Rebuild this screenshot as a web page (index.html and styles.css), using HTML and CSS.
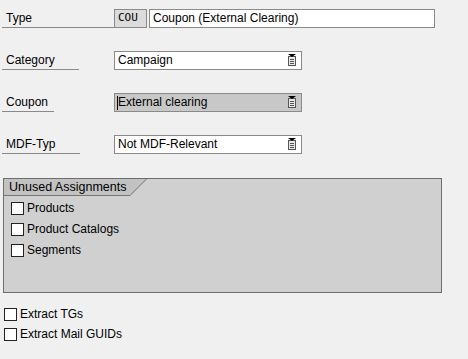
FILE: index.html
```html
<!DOCTYPE html>
<html>
<head>
<meta charset="utf-8">
<link rel="stylesheet" href="styles.css">
</head>
<body>
<div class="page">
  <div class="row">
    <div class="label w-type"><span>Type</span></div>
    <div class="code">COU</div>
    <div class="field text-field">Coupon (External Clearing)</div>
  </div>
  <div class="row">
    <div class="label w-cat"><span>Category</span></div>
    <div class="field dropdown"><span class="val">Campaign</span>
      <svg class="dd" width="10" height="12" viewBox="0 0 10 12"><rect x="1.5" y="2.5" width="7" height="9" fill="#e8e8e8" stroke="#555"/><path d="M3 5.5h4M3 7.5h4M3 9.5h4" stroke="#555"/><path d="M1 0h8l-4 3z" fill="#000"/></svg>
    </div>
  </div>
  <div class="row">
    <div class="label w-coupon"><span>Coupon</span></div>
    <div class="field dropdown active"><span class="val"><span class="caret"></span>External clearing</span>
      <svg class="dd" width="10" height="12" viewBox="0 0 10 12"><rect x="1.5" y="2.5" width="7" height="9" fill="#e8e8e8" stroke="#555"/><path d="M3 5.5h4M3 7.5h4M3 9.5h4" stroke="#555"/><path d="M1 0h8l-4 3z" fill="#000"/></svg>
    </div>
  </div>
  <div class="row">
    <div class="label w-mdf"><span>MDF-Typ</span></div>
    <div class="field dropdown"><span class="val">Not MDF-Relevant</span>
      <svg class="dd" width="10" height="12" viewBox="0 0 10 12"><rect x="1.5" y="2.5" width="7" height="9" fill="#e8e8e8" stroke="#555"/><path d="M3 5.5h4M3 7.5h4M3 9.5h4" stroke="#555"/><path d="M1 0h8l-4 3z" fill="#000"/></svg>
    </div>
  </div>

  <div class="group">
    <div class="tabbar">
      <div class="tab">Unused Assignments</div>
      <svg class="slant" width="17" height="17" viewBox="0 0 17 17"><path d="M0 0H17L0 17z" fill="#c2c2c2"/><path d="M0 16.5L16.5 0" stroke="#777" stroke-width="1"/></svg>
    </div>
    <div class="checks">
      <label class="check"><span class="box"></span>Products</label>
      <label class="check"><span class="box"></span>Product Catalogs</label>
      <label class="check"><span class="box"></span>Segments</label>
    </div>
  </div>

  <div class="outer-checks">
    <label class="check"><span class="box"></span>Extract TGs</label>
    <label class="check"><span class="box"></span>Extract Mail GUIDs</label>
  </div>
</div>
</body>
</html>
```

FILE: styles.css
```css
html, body {
  margin: 0;
  padding: 0;
  background: #f0f0f0;
}
body {
  width: 468px;
  height: 359px;
  overflow: hidden;
  font-family: "Liberation Sans", Arial, sans-serif;
  font-size: 12px;
  color: #000;
}
.page {
  padding-top: 9px;
  display: flex;
  flex-direction: column;
}
.row {
  display: flex;
  align-items: stretch;
  height: 19px;
  margin-bottom: 23px;
}
.row:nth-child(4) {
  margin-bottom: 24px;
}
.label {
  width: 112px;
  display: flex;
  align-items: flex-end;
  padding-left: 2px;
}
.label span {
  display: block;
  box-sizing: border-box;
  padding-left: 4px;
  padding-bottom: 2px;
  border-bottom: 1px solid #8a8a8a;
  line-height: 14px;
}
.w-type span { width: 112px; }
.w-cat span { width: 77px; }
.w-coupon span { width: 52px; }
.w-mdf span { width: 78px; }

.code {
  box-sizing: border-box;
  width: 33px;
  background: #dcdcdc;
  border: 1px solid #8a8a8a;
  font-family: "DejaVu Sans Mono", "Liberation Mono", monospace;
  font-size: 11px;
  line-height: 16px;
  padding-left: 3px;
}
.field {
  box-sizing: border-box;
  border: 1px solid #8a8a8a;
  background: #fff;
  line-height: 17px;
  padding-left: 3px;
}
.text-field {
  margin-left: 2px;
  width: 286px;
}
.dropdown {
  width: 188px;
  display: flex;
  align-items: center;
  justify-content: space-between;
  padding-right: 4px;
}
.dropdown.active {
  background: #c8c8c8;
  padding-left: 2px;
}
.val {
  display: flex;
  align-items: center;
}
.caret {
  display: inline-block;
  width: 1px;
  height: 14px;
  background: #000;
}
.dd {
  display: block;
  margin-top: -1px;
}

.group {
  box-sizing: border-box;
  margin-left: 3px;
  width: 439px;
  height: 115px;
  border: 1px solid #6e6e6e;
  background: #d0d0d0;
}
.tabbar {
  display: flex;
  height: 17px;
}
.tab {
  box-sizing: border-box;
  width: 126px;
  height: 17px;
  background: #c2c2c2;
  border-bottom: 1px solid #777;
  padding-left: 5px;
  line-height: 16px;
  font-size: 12.5px;
}
.slant {
  display: block;
}
.checks {
  padding-top: 6px;
  padding-left: 7px;
  display: flex;
  flex-direction: column;
  gap: 8px;
}
.check {
  display: flex;
  align-items: center;
  height: 13px;
  line-height: 13px;
}
.box {
  box-sizing: border-box;
  width: 13px;
  height: 13px;
  border: 1px solid #222;
  background: #fff;
  margin-right: 3px;
  flex: none;
}
.outer-checks {
  padding-top: 15px;
  padding-left: 4px;
  display: flex;
  flex-direction: column;
  gap: 7px;
}
```
